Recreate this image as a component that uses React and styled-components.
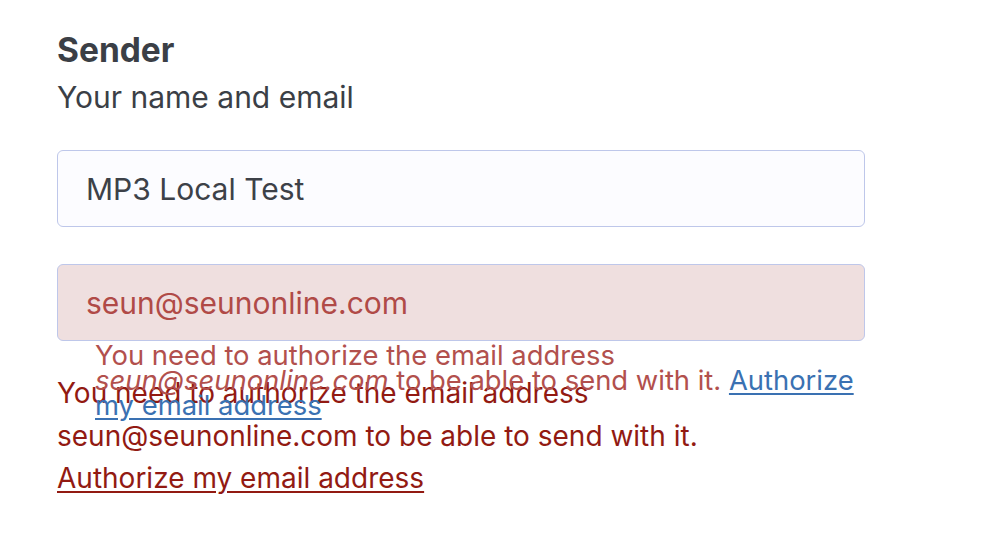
import React from "react";
import styled, { createGlobalStyle } from "styled-components";

const Global = createGlobalStyle`
  html, body { margin: 0; padding: 0; background: #ffffff; }
  body { font-family: Inter, "Liberation Sans", Arial, sans-serif; }
`;

const Page = styled.div`
  padding: 30px 0 0 57px;
  width: 808px;
`;

const Title = styled.h2`
  margin: 0;
  font-size: 33.5px;
  line-height: 40px;
  font-weight: 700;
  color: #3b3f46;
`;

const Subtitle = styled.p`
  margin: 7px 0 0;
  font-size: 30px;
  line-height: 40px;
  font-weight: 400;
  color: #3b3f46;
`;

const Fields = styled.div`
  display: flex;
  flex-direction: column;
  gap: 37px;
  margin-top: 33px;
`;

const Field = styled.div`
  position: relative;
`;

const Input = styled.input`
  box-sizing: border-box;
  display: block;
  width: 808px;
  height: 77px;
  margin: 0;
  padding: 0 28px;
  border: 1.5px solid #bec7ea;
  border-radius: 6px;
  outline: none;
  font-family: inherit;
  font-size: 30px;
  background: ${(p) => (p.$invalid ? "#efdfdf" : "#fcfcff")};
  color: ${(p) => (p.$invalid ? "#b04a47" : "#3d4148")};
`;

const Overlay = styled.div`
  position: absolute;
  top: calc(100% + 2px);
  left: 38px;
  right: 0;
  font-size: 27.4px;
  line-height: 25px;
  color: #b2504d;
  em { font-style: italic; }
`;

const OverlayLink = styled.a`
  color: #3a71b2;
  text-decoration: underline;
  text-underline-offset: 3px;
`;

const Error = styled.div`
  margin-top: 31px;
  font-size: 28px;
  line-height: 42.5px;
  color: #921a12;
`;

const ErrorLink = styled.a`
  display: block;
  color: #921a12;
  text-decoration: underline;
  text-underline-offset: 3px;
`;

export default function App() {
  return (
    <>
      <Global />
      <Page>
        <Title>Sender</Title>
        <Subtitle>Your name and email</Subtitle>
        <Fields>
          <Field>
            <Input readOnly defaultValue="MP3 Local Test" />
          </Field>
          <Field>
            <Input $invalid readOnly defaultValue="seun@seunonline.com" />
            <Overlay>
              You need to authorize the email address <em>seun@seunonline.com</em> to be
              able to send with it. <OverlayLink href="#">Authorize my email address</OverlayLink>
            </Overlay>
          </Field>
        </Fields>
        <Error>
          You need to authorize the email address seun@seunonline.com to be able to send with it.
          <ErrorLink href="#">Authorize my email address</ErrorLink>
        </Error>
      </Page>
    </>
  );
}
